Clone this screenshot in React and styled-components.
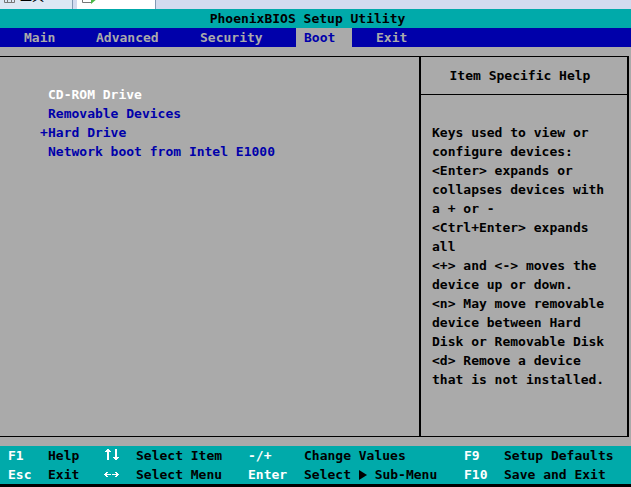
import React, { useState } from "react"
import styled, { createGlobalStyle } from "styled-components"

const GlobalStyle = createGlobalStyle`
  * {
    box-sizing: border-box;
  }
  body {
    margin: 0;
    background: #aaaaaa;
  }
`

const Screen = styled.div`
  display: flex;
  flex-direction: column;
  min-height: 100vh;
  font-family: "DejaVu Sans Mono", "Liberation Mono", monospace;
  font-size: 13px;
  font-weight: bold;
  line-height: 19px;
  color: #000;
  white-space: pre;
`

const TabStrip = styled.div`
  display: flex;
  gap: 4px;
  height: 9px;
  overflow: hidden;
  background: #d3dbef;
`

const WindowTab = styled.div`
  display: flex;
  align-items: flex-end;
  gap: 5px;
  width: ${(props) => (props.$active ? "79px" : "73px")};
  padding-left: 4px;
  border-right: 1px solid #8299b4;
  background: ${(props) => (props.$active ? "#fff" : "#dce8f4")};

  svg {
    flex: none;
    margin-bottom: 5px;
  }
`

const TabLabel = styled.span`
  font-family: "Noto Sans CJK SC", sans-serif;
  font-size: 12px;
  font-weight: normal;
  line-height: 16px;
  margin-bottom: 5px;
`

const TitleBar = styled.h1`
  margin: 0;
  padding-right: 16px;
  background: #00aaaa;
  font-size: 13px;
  text-align: center;
`

const MenuBar = styled.nav`
  display: grid;
  grid-template-columns: 56px 88px 88px 56px 56px;
  column-gap: 16px;
  padding-left: 16px;
  background: #0000aa;
`

const MenuButton = styled.button`
  padding: 0 0 0 8px;
  border: 0;
  background: ${(props) => (props.$active ? "#aaaaaa" : "transparent")};
  color: ${(props) => (props.$active ? "#0000aa" : "#aaaaaa")};
  font: inherit;
  text-align: left;
  cursor: pointer;
`

const Frame = styled.main`
  flex: 1;
  display: grid;
  grid-template-columns: 1fr 210px;
  margin: 9px 2px 9px 0;
  border: solid #000;
  border-width: 1px 0;
`

const DeviceList = styled.ul`
  margin: 0;
  padding: 28px 0 0 40px;
  list-style: none;
`

const Device = styled.li`
  display: grid;
  grid-template-columns: 8px 1fr;
  color: ${(props) => (props.$selected ? "#fff" : "#0000aa")};
`

const DeviceName = styled.span`
  grid-column: 2;
`

const HelpPanel = styled.aside`
  border: solid #000;
  border-width: 0 2px;
`

const HelpTitle = styled.h2`
  margin: 0;
  padding: 9px 8px 9px 0;
  border-bottom: 1px solid #000;
  font-size: 13px;
  text-align: center;
`

const HelpText = styled.p`
  margin: 0;
  padding: 28px 0 0 11px;
`

const KeyBar = styled.footer`
  display: grid;
  grid-template-columns: 40px 56px 32px 112px 56px 160px 40px 1fr;
  padding-left: 8px;
  border-bottom: 3px solid #000;
  background: #00aaaa;
`

const Key = styled.span`
  color: #fff;
`

const KeyIcon = styled.svg`
  display: block;
  fill: none;
  stroke: #fff;
`

const SubMenuIcon = styled.svg`
  display: inline-block;
  vertical-align: -1px;
`

const menus = ["Main", "Advanced", "Security", "Boot", "Exit"]

const devices = [
  { name: "CD-ROM Drive", selected: true },
  { name: "Removable Devices" },
  { name: "Hard Drive", expandable: true },
  { name: "Network boot from Intel E1000" },
]

const helpText = `Keys used to view or
configure devices:
<Enter> expands or
collapses devices with
a + or -
<Ctrl+Enter> expands
all
<+> and <-> moves the
device up or down.
<n> May move removable
device between Hard
Disk or Removable Disk
<d> Remove a device
that is not installed.`

const UpDownIcon = () => (
  <KeyIcon width="16" height="19" viewBox="0 0 16 19" shapeRendering="crispEdges">
    <path d="M4 3v11M12 3v11" strokeWidth="2" />
    <path d="M2 4.5h4M1 5.5h6M10 12.5h4M9 11.5h6" />
  </KeyIcon>
)

const LeftRightIcon = () => (
  <KeyIcon width="16" height="19" viewBox="0 0 16 19" shapeRendering="crispEdges">
    <path d="M0 9.5h7M1 8.5h2M1 10.5h2M2 7.5h2M2 11.5h2" />
    <path d="M8 9.5h7M12 8.5h2M12 10.5h2M11 7.5h2M11 11.5h2" />
  </KeyIcon>
)

const App = () => {
  const [menu, setMenu] = useState("Boot")

  return (
    <>
      <GlobalStyle />
      <Screen>
        <TabStrip>
          <WindowTab>
            <svg width="11" height="12" viewBox="0 0 11 12" fill="none" stroke="#777">
              <path d="M.5 0v10.5h10V0M0 6.5h11M3.5 6v4M7.5 6v4" />
            </svg>
            <TabLabel>工具</TabLabel>
          </WindowTab>
          <WindowTab $active>
            <svg width="16" height="12" viewBox="0 0 16 12">
              <path d="M1.5 0v10.5h9" fill="none" stroke="#777" />
              <path d="M10 0l7 6-7 6z" fill="#4db848" />
            </svg>
          </WindowTab>
        </TabStrip>
        <TitleBar>PhoenixBIOS Setup Utility</TitleBar>
        <MenuBar>
          {menus.map((name) => (
            <MenuButton
              key={name}
              $active={name === menu}
              onClick={() => setMenu(name)}
            >
              {name}
            </MenuButton>
          ))}
        </MenuBar>
        <Frame>
          <DeviceList>
            {devices.map((device) => (
              <Device key={device.name} $selected={device.selected}>
                {device.expandable && <span>+</span>}
                <DeviceName>{device.name}</DeviceName>
              </Device>
            ))}
          </DeviceList>
          <HelpPanel>
            <HelpTitle>Item Specific Help</HelpTitle>
            <HelpText>{helpText}</HelpText>
          </HelpPanel>
        </Frame>
        <KeyBar>
          <Key>F1</Key>
          <span>Help</span>
          <UpDownIcon />
          <span>Select Item</span>
          <Key>-/+</Key>
          <span>Change Values</span>
          <Key>F9</Key>
          <span>Setup Defaults</span>
          <Key>Esc</Key>
          <span>Exit</span>
          <LeftRightIcon />
          <span>Select Menu</span>
          <Key>Enter</Key>
          <span>
            Select{" "}
            <SubMenuIcon width="8" height="10" viewBox="0 0 8 10">
              <path d="M0 0l8 5-8 5z" />
            </SubMenuIcon>{" "}
            Sub-Menu
          </span>
          <Key>F10</Key>
          <span>Save and Exit</span>
        </KeyBar>
      </Screen>
    </>
  )
}

export default App
